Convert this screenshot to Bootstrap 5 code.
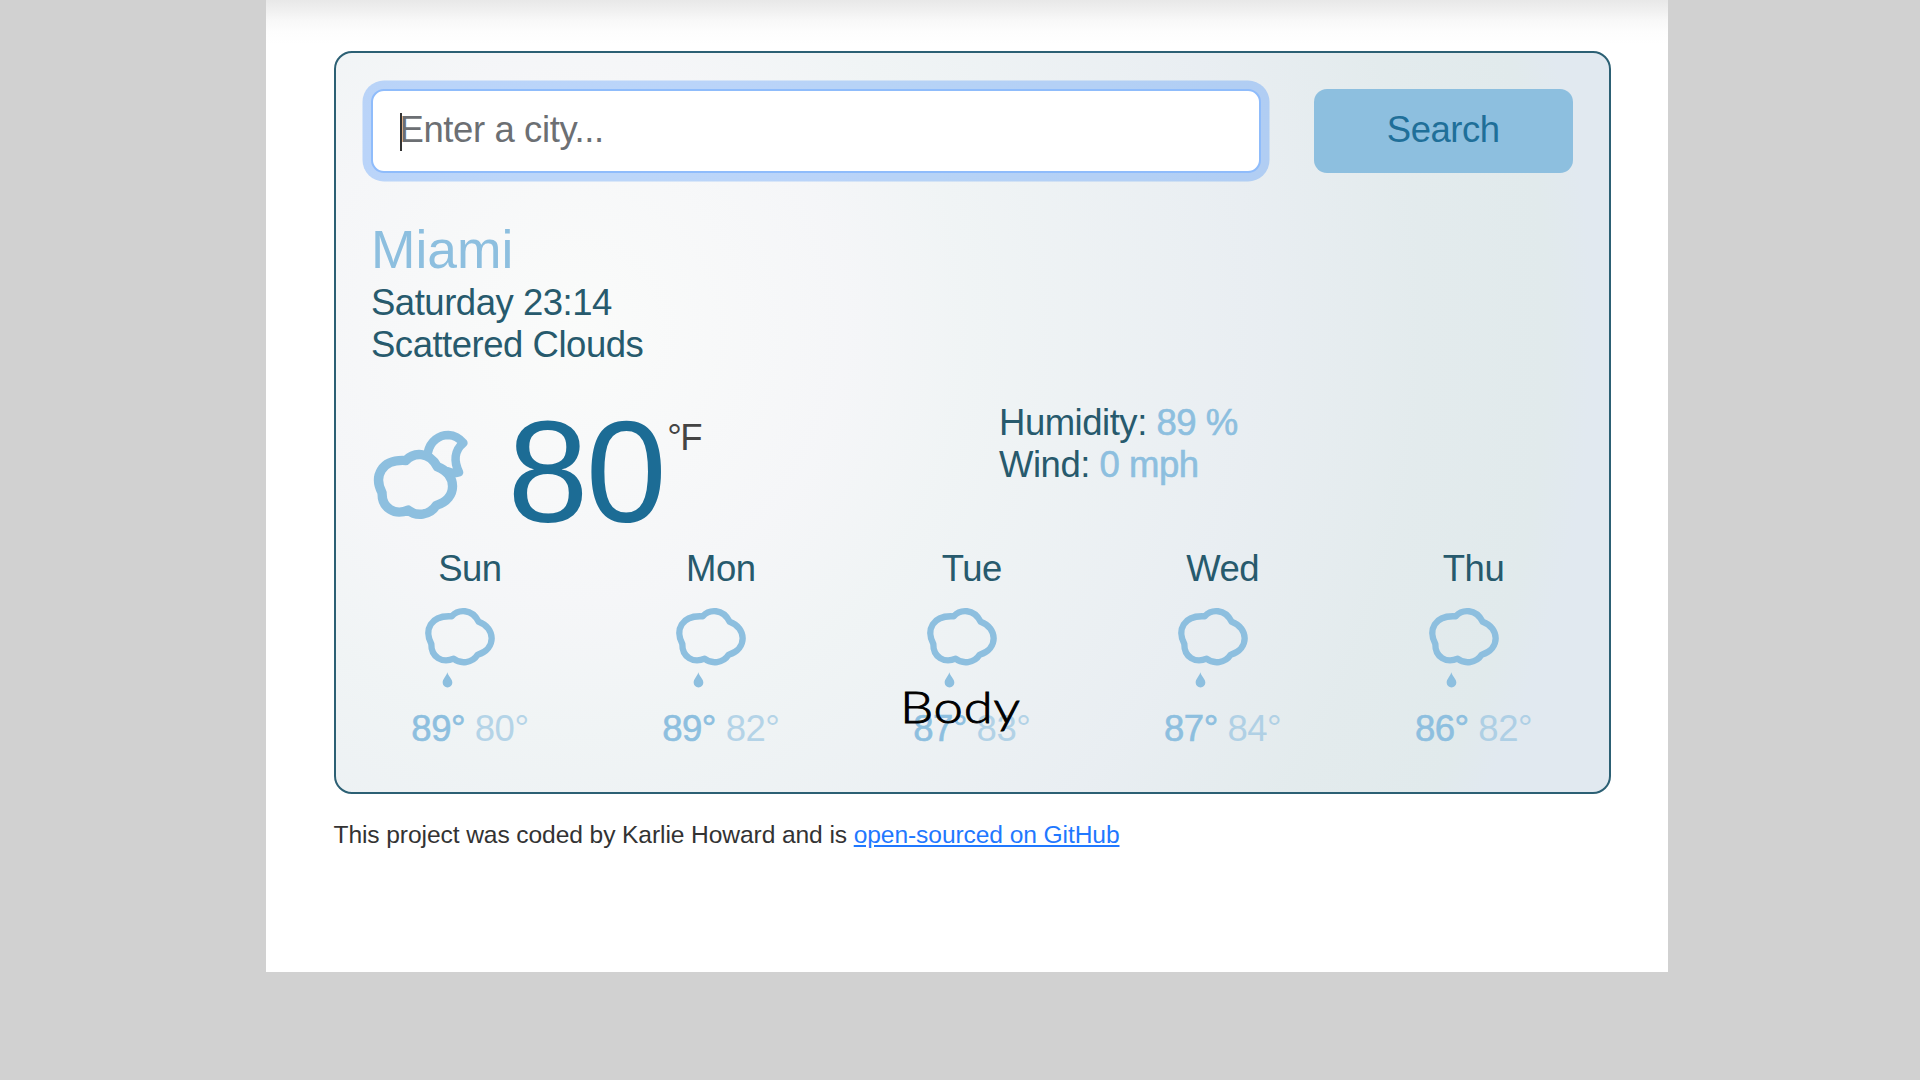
<!DOCTYPE html>
<html lang="en">
<head>
<meta charset="utf-8">
<meta name="viewport" content="width=device-width, initial-scale=1">
<title>Weather</title>
<link href="https://cdn.jsdelivr.net/npm/bootstrap@5.3.0/dist/css/bootstrap.min.css" rel="stylesheet">
<script src="https://cdn.jsdelivr.net/npm/bootstrap@5.3.0/dist/js/bootstrap.bundle.min.js"></script>
<style>
  body { background: #d1d1d1; font-family: "Liberation Sans", Arial, sans-serif; font-size: 36.5px; letter-spacing: -.48px; line-height: 42.3px; overflow: hidden; }
  .page { width: 1402px; height: 972px; margin-left: 266px; padding: 50.5px 57px 0 67.5px; background: linear-gradient(#e8e8e8 0, #eeeeee 8px, #f8f8f8 20px, #fdfdfd 32px, #fff 44px) #fff; }
  .weather { height: 743.5px; padding: 36px 36px 35.5px 35.5px; border: 2.5px solid #2c6074; border-radius: 18px; color: #275a6d;
    background: radial-gradient(circle at 18.7% 37.8%, #fafbfa 0, #f5f6f8 24%, #f0f4f5 35%, #e9eef2 60%, #e3ebed 75%, #e1eaec 86%, #e1e9f0 90%); }
  .search-row { gap: 53px; }
  .city-input, .city-input:focus { height: 84.5px; border: 2.5px solid #8fbcfb; border-radius: 13px; padding: 0 26px 2px 26.5px; font-size: 36.5px; letter-spacing: -.4px; color: #333; background: #fff; box-shadow: 0 0 0 8.5px rgba(13,110,253,.25); }
  .city-input::placeholder { color: #6c6f73; }
  .btn-search { width: 259.5px; height: 84.5px; border-radius: 13px; font-size: 36.5px; letter-spacing: -.45px; background: #8dbfdf; color: #1f6f99; border: 0; }
  .city-name { font-size: 53.4px; letter-spacing: 0; line-height: 64px; margin: 45px 0 0; color: #8dbfdf; font-weight: 400; }
  .now { height: 147px; margin-top: 34.4px; }
  .now-icon { width: 120px; height: 110px; margin: 19.5px 0 0 -11.5px; }
  .degrees { font-size: 145.5px; letter-spacing: -2.6px; line-height: 142px; color: #1c6c95; margin-left: 28px; }
  .unit { color: #444; margin-top: 16px; margin-left: 3px; letter-spacing: -1.5px; }
  .facts { width: 574px; padding-top: 1px; }
  .value { color: #8dbfdf; -webkit-text-stroke: .6px #8dbfdf; }
  .forecast { margin: 0 -26px 0 -26.5px; }
  .day-icon { width: 120px; height: 117.5px; margin-left: -1px; }
  .low { color: #8dbfdf; opacity: .6; }
  .credit { font-size: 24.6px; letter-spacing: -.1px; line-height: 30px; margin-top: 26px; color: #333; }
  .credit a { color: #1f78ff; }
  .caret { width: 2px; height: 38px; left: 28.5px; top: 24.5px; background: #333; }
  .overlay-label { left: 900px; top: 677px; font: 300 43.5px/58px Lato, sans-serif; letter-spacing: .6px; color: #000; -webkit-text-stroke: .9px #000; transform: scaleX(1.21); transform-origin: left; }
</style>
</head>
<body>
<svg class="d-none" aria-hidden="true">
  <symbol id="rain" viewBox="0 -15 360 352.5">
    <path d="M128 64C148 42 188 40 209 80C260 98 263 162 206 179C190 205 154 208 134 191C100 206 66 186 67 147C45 105 64 60 128 64Z" fill="none" stroke="#8dbfdf" stroke-width="19" stroke-linejoin="round"/>
    <path d="M115 232C119 246 130 252 130 263A14.5 14.5 0 0 1 101 263C101 252 111 246 115 232Z" fill="#8dbfdf"/>
  </symbol>
</svg>
<main class="page">
  <section class="weather">
    <form class="search-row d-flex">
      <div class="position-relative flex-grow-1">
        <input class="form-control city-input" type="text" placeholder="Enter a city...">
        <span class="caret position-absolute"></span>
      </div>
      <button class="btn btn-search" type="button">Search</button>
    </form>
    <h1 class="city-name">Miami</h1>
    <div>Saturday 23:14</div>
    <div>Scattered Clouds</div>
    <div class="now d-flex justify-content-between">
      <div class="d-flex align-items-start">
        <svg class="now-icon" viewBox="0 0 360 330" fill="none" stroke="#8dbfdf" stroke-linejoin="round" stroke-linecap="round">
          <path stroke-width="28" d="M137.5 121.6C161 96 207.6 93.5 232 140.3C291.7 161.4 295 236.3 228.6 256.2C210 286.6 167.9 290 144.5 270.2C104.8 287.8 65 264.3 66.3 218.7C40.6 169.6 62.8 117 137.5 121.6Z"/>
          <path stroke-width="26" d="M204 96C211 63 238 45 265 45C283 46 298 54 310 69C283 91 281 124 297 157C287 161 275 159 264 154"/>
        </svg>
        <span class="degrees">80</span>
        <span class="unit">°F</span>
      </div>
      <div class="facts">
        <div>Humidity: <span class="value">89 %</span></div>
        <div>Wind: <span class="value">0 mph</span></div>
      </div>
    </div>
    <div class="forecast row g-0 row-cols-5 text-center">
      <div class="col d-flex flex-column align-items-center"><div>Sun</div><svg class="day-icon"><use href="#rain"/></svg><div><span class="value">89°</span> <span class="low">80°</span></div></div>
      <div class="col d-flex flex-column align-items-center"><div>Mon</div><svg class="day-icon"><use href="#rain"/></svg><div><span class="value">89°</span> <span class="low">82°</span></div></div>
      <div class="col d-flex flex-column align-items-center"><div>Tue</div><svg class="day-icon"><use href="#rain"/></svg><div><span class="value">87°</span> <span class="low">83°</span></div></div>
      <div class="col d-flex flex-column align-items-center"><div>Wed</div><svg class="day-icon"><use href="#rain"/></svg><div><span class="value">87°</span> <span class="low">84°</span></div></div>
      <div class="col d-flex flex-column align-items-center"><div>Thu</div><svg class="day-icon"><use href="#rain"/></svg><div><span class="value">86°</span> <span class="low">82°</span></div></div>
    </div>
  </section>
  <footer class="credit">This project was coded by Karlie Howard and is <a href="#">open-sourced on GitHub</a></footer>
</main>
<div class="overlay-label position-absolute">Body</div>
</body>
</html>
